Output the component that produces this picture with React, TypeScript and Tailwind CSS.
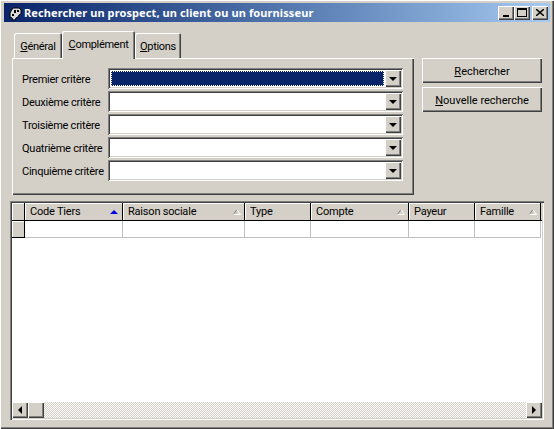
import type { ReactNode } from "react";

const criteria = ["Premier critère", "Deuxième critère", "Troisième critère", "Quatrième critère", "Cinquième critère"];

const columns = [
  { label: "Code Tiers", width: "w-[98px]", sort: "asc" },
  { label: "Raison sociale", width: "w-[122px]", sort: "off" },
  { label: "Type", width: "w-[66px]", sort: "none" },
  { label: "Compte", width: "w-[98px]", sort: "off" },
  { label: "Payeur", width: "w-[66px]", sort: "none" },
  { label: "Famille", width: "w-[66px]", sort: "off" },
];

const raised = "bg-[#d4d0c8] shadow-[inset_1px_1px_0_#ffffff,inset_-1px_-1px_0_#404040,inset_-2px_-2px_0_#808080]";

function AppIcon() {
  return (
    <svg width="16" height="16" viewBox="0 0 16 16" className="shrink-0">
      <path d="M6 3h6l2 2v4l-2 1-1 2-2 1-1 2H6l-1-2-2-1V8l1-2z" fill="#d8d8d8" stroke="#000" />
      <rect x="7" y="5" width="2" height="3" fill="#000" />
      <rect x="10" y="5" width="2" height="2" fill="#000" />
      <rect x="5" y="9" width="2" height="2" fill="#000" />
      <rect x="12" y="4" width="1" height="1" fill="#fff" />
    </svg>
  );
}

function CaptionButton({ children, className = "" }: { children: ReactNode; className?: string }) {
  return (
    <div className={`w-4 h-3.5 flex items-center justify-center shadow-[inset_1px_1px_0_#ffffff,inset_-1px_-1px_0_#404040,inset_-2px_-2px_0_#808080] bg-[#d4d0c8] ${className}`}>
      {children}
    </div>
  );
}

function Tab({ label, mnemonic, active = false, className = "" }: { label: string; mnemonic: string; active?: boolean; className?: string }) {
  return (
    <div
      className={`flex items-center justify-center bg-[#d4d0c8] rounded-t-[2px] tracking-[-0.3px] shadow-[inset_1px_1px_0_#ffffff,inset_-1px_0_0_#404040,inset_-2px_0_0_#808080] ${
        active ? "h-[28px] relative z-10 -mb-px pb-0.5" : "h-[25px] pt-0.5"
      } ${className}`}
    >
      <span>
        <span className="underline">{mnemonic}</span>
        {label}
      </span>
    </div>
  );
}

function Combo({ selected = false }: { selected?: boolean }) {
  return (
    <div className="w-[295px] h-[21px] p-0.5 bg-white flex shadow-[inset_1px_1px_0_#808080,inset_-1px_-1px_0_#ffffff,inset_2px_2px_0_#404040,inset_-2px_-2px_0_#d4d0c8]">
      <div className="flex-1 p-px">
        {selected && <div className="h-full bg-[#0a246a] outline-1 outline-dotted outline-white -outline-offset-1" />}
      </div>
      <div className={`w-4 h-full flex items-center justify-center ${raised}`}>
        <div className="w-0 h-0 border-x-[4px] border-x-transparent border-t-[4px] border-t-black" />
      </div>
    </div>
  );
}

function Button({ label, mnemonic }: { label: string; mnemonic: string }) {
  return (
    <div className={`w-[120px] h-[25px] flex items-center justify-center pt-px ${raised}`}>
      <span>
        <span className="underline">{mnemonic}</span>
        {label}
      </span>
    </div>
  );
}

function SortMark({ sort }: { sort: string }) {
  if (sort === "none") return null;
  if (sort === "asc") {
    return <div className="w-0 h-0 mr-px border-x-[4px] border-x-transparent border-b-[4px] border-b-[#0000e0]" />;
  }
  return (
    <svg width="8" height="6" viewBox="0 0 8 6">
      <path d="M0.5 5.5L4 0.5" stroke="#808080" fill="none" />
      <path d="M4 0.5L7.5 5.5H0.5" stroke="#ffffff" fill="none" />
    </svg>
  );
}

export default function App() {
  return (
    <div
      className={`w-[554px] h-[429px] p-[3px] flex flex-col overflow-hidden text-[11px] leading-none text-black whitespace-nowrap ${raised} font-['Roboto',sans-serif]`}
    >
      {/* title bar */}
      <div className="h-[19px] shrink-0 mx-px flex items-center pl-[3px] pr-[2px] bg-gradient-to-r from-[#0a246a] to-[#a6caf0] text-white">
        <AppIcon />
        <span className="ml-px font-bold font-['Noto_Sans',sans-serif] text-[11px] tracking-[0.1px]">Rechercher un prospect, un client ou un fournisseur</span>
        <div className="ml-auto flex items-center">
          <CaptionButton>
            <div className="w-1.5 h-0.5 bg-black mt-1.5" />
          </CaptionButton>
          <CaptionButton>
            <div className="w-[10px] h-[9px] border border-black border-t-2" />
          </CaptionButton>
          <CaptionButton className="ml-0.5">
            <svg width="8" height="7" viewBox="0 0 8 7">
              <path d="M0 0L8 7M8 0L0 7" stroke="#000" strokeWidth="1.4" />
            </svg>
          </CaptionButton>
        </div>
      </div>

      {/* body */}
      <div className="flex-1 min-h-0 flex flex-col px-[7px] pt-[9px] pb-1.5">
        <div className="flex h-[164px] shrink-0 pl-0.5">
          <div className="w-[402px] flex flex-col">
            <div className="flex items-end h-[27px] pl-0.5 shrink-0">
              <Tab label="énéral" mnemonic="G" className="w-[48px]" />
              <Tab label="omplément" mnemonic="C" active className="w-[73px]" />
              <Tab label="ptions" mnemonic="O" className="w-[46px]" />
            </div>
            <div className="flex-1 pl-2.5 pt-2.5 flex flex-col gap-0.5 shadow-[inset_1px_1px_0_#ffffff,inset_-1px_-1px_0_#404040,inset_-2px_-2px_0_#808080]">
              {criteria.map((c, i) => (
                <div key={c} className="flex items-center h-[21px]">
                  <span className="w-[86px] pt-0.5 tracking-[-0.25px]">{c}</span>
                  <Combo selected={i === 0} />
                </div>
              ))}
            </div>
          </div>
          <div className="ml-2 pt-[27px] flex flex-col gap-1">
            <Button label="echercher" mnemonic="R" />
            <Button label="ouvelle recherche" mnemonic="N" />
          </div>
        </div>

        {/* grid */}
        <div className="mt-1.5 flex-1 min-h-0 p-0.5 bg-white flex flex-col shadow-[inset_1px_1px_0_#808080,inset_2px_2px_0_#404040,inset_-1px_-1px_0_#ffffff,inset_-2px_-2px_0_#d4d0c8]">
          <div className="flex-1 min-h-0">
            <div className="flex h-[18px] bg-[#d4d0c8] border-b border-black">
              <div className="w-[13px] border-r border-black shadow-[inset_1px_1px_0_#ffffff]" />
              {columns.map((col) => (
                <div
                  key={col.label}
                  className={`${col.width} flex items-center justify-between pl-[5px] pr-[3px] border-r border-black tracking-[-0.2px] shadow-[inset_1px_1px_0_#ffffff]`}
                >
                  <span>{col.label}</span>
                  <SortMark sort={col.sort} />
                </div>
              ))}
            </div>
            <div className="flex h-[17px]">
              <div className="w-[13px] bg-[#d4d0c8] border-r border-b border-black shadow-[inset_1px_1px_0_#ffffff]" />
              {columns.map((col) => (
                <div key={col.label} className={`${col.width} border-r border-b border-[#c0c0c0]`} />
              ))}
            </div>
          </div>
          <div className="h-4 shrink-0 flex bg-[repeating-conic-gradient(#d4d0c8_0%_25%,#ffffff_0%_50%)] bg-[length:2px_2px]">
            <div className={`w-4 h-full flex items-center justify-center ${raised}`}>
              <div className="w-0 h-0 border-y-[4px] border-y-transparent border-r-[4px] border-r-black" />
            </div>
            <div className={`w-4 h-full ${raised}`} />
            <div className="flex-1" />
            <div className={`w-4 h-full flex items-center justify-center ${raised}`}>
              <div className="w-0 h-0 border-y-[4px] border-y-transparent border-l-[4px] border-l-black" />
            </div>
          </div>
        </div>
      </div>
    </div>
  );
}
